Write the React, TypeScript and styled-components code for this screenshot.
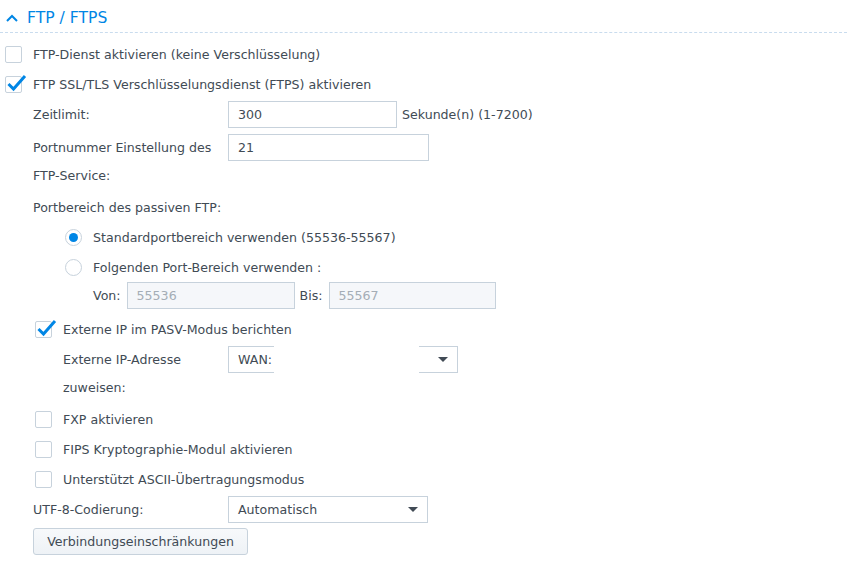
import React from "react";
import styled, { createGlobalStyle } from "styled-components";

const COLORS = {
  text: "#414b55",
  blue: "#0086e5",
  border: "#c7d2dc",
  dashed: "#c9dcee",
  disabledBg: "#f5f7fa",
  disabledText: "#a4adb6",
};

const GlobalStyle = createGlobalStyle`
  body {
    margin: 0;
    background: #fff;
    font-family: "DejaVu Sans", Verdana, sans-serif;
    font-size: 12.6px;
    color: ${COLORS.text};
  }
`;

const Panel = styled.div`
  width: 847px;
  display: flex;
  flex-direction: column;
`;

const Header = styled.div`
  display: flex;
  align-items: center;
  gap: 9px;
  box-sizing: border-box;
  height: 33px;
  padding: 3px 0 0 6px;
  border-bottom: 1px dashed ${COLORS.dashed};
  color: ${COLORS.blue};
  font-size: 15.6px;
  margin-bottom: 6px;
`;

const Body = styled.div`
  display: flex;
  flex-direction: column;
`;

const Row = styled.div<{ $indent?: number }>`
  display: flex;
  align-items: center;
  height: 30px;
  padding-left: ${(p) => p.$indent ?? 0}px;
  white-space: nowrap;
`;

const Box = styled.span`
  position: relative;
  width: 17px;
  height: 17px;
  box-sizing: border-box;
  border: 1px solid ${COLORS.border};
  border-radius: 2px;
  margin-right: 11px;
  flex-shrink: 0;

  svg {
    position: absolute;
    left: 1px;
    top: -4px;
    overflow: visible;
  }
`;

const Radio = styled.span<{ $on?: boolean }>`
  width: 17px;
  height: 17px;
  box-sizing: border-box;
  border: 1px solid ${COLORS.border};
  border-radius: 50%;
  margin-right: 11px;
  display: flex;
  align-items: center;
  justify-content: center;
  flex-shrink: 0;

  &::after {
    content: "";
    display: ${(p) => (p.$on ? "block" : "none")};
    width: 9px;
    height: 9px;
    border-radius: 50%;
    background: ${COLORS.blue};
  }
`;

const FieldRow = styled.div<{ $indent?: number; $top?: number; $bottom?: number }>`
  display: flex;
  align-items: flex-start;
  padding: ${(p) => p.$top ?? 2}px 0 ${(p) => p.$bottom ?? 2}px ${(p) => p.$indent ?? 33}px;
`;

const Label = styled.div<{ $width: number }>`
  width: ${(p) => p.$width}px;
  line-height: 28px;
  flex-shrink: 0;
`;

const Input = styled.div<{ $width: number; $disabled?: boolean }>`
  width: ${(p) => p.$width}px;
  height: 27px;
  box-sizing: border-box;
  border: 1px solid ${COLORS.border};
  background: ${(p) => (p.$disabled ? COLORS.disabledBg : "#fff")};
  color: ${(p) => (p.$disabled ? COLORS.disabledText : COLORS.text)};
  padding-left: 9px;
  display: flex;
  align-items: center;
  flex-shrink: 0;
`;

const Select = styled(Input)`
  justify-content: space-between;
  padding-right: 9px;
  position: relative;
`;

const Arrow = styled.span`
  width: 0;
  height: 0;
  border-left: 5px solid transparent;
  border-right: 5px solid transparent;
  border-top: 5px solid ${COLORS.text};
`;

const Masked = styled.span`
  position: absolute;
  left: 45px;
  top: -2px;
  width: 145px;
  height: calc(100% + 4px);
  background: #fff;
`;

const Suffix = styled.span<{ $before?: number; $after?: number }>`
  line-height: 27px;
  margin-left: ${(p) => p.$before ?? 5}px;
  margin-right: ${(p) => p.$after ?? 0}px;
`;

const Button = styled.button`
  align-self: flex-start;
  margin: 2px 0 0 33px;
  height: 27px;
  width: 215px;
  border: 1px solid ${COLORS.border};
  border-radius: 3px;
  background: linear-gradient(#f7f9fb, #eef2f6);
  font-family: inherit;
  font-size: 12.6px;
  color: ${COLORS.text};
`;

function Check({ on }: { on?: boolean }) {
  return (
    <Box>
      {on && (
        <svg width="20" height="20" viewBox="0 0 20 20">
          <path
            d="M1.5 11 L6.5 16 L18 3"
            fill="none"
            stroke={COLORS.blue}
            strokeWidth="3"
            strokeLinejoin="miter"
          />
        </svg>
      )}
    </Box>
  );
}

function Chevron() {
  return (
    <svg width="12" height="8" viewBox="0 0 12 8">
      <path d="M1 7 L6 2 L11 7" fill="none" stroke={COLORS.blue} strokeWidth="2" />
    </svg>
  );
}

export default function App() {
  return (
    <>
      <GlobalStyle />
      <Panel>
        <Header>
          <Chevron />
          FTP / FTPS
        </Header>
        <Body>
          <Row $indent={5}>
            <Check />
            FTP-Dienst aktivieren (keine Verschlüsselung)
          </Row>
          <Row $indent={5}>
            <Check on />
            FTP SSL/TLS Verschlüsselungsdienst (FTPS) aktivieren
          </Row>
          <FieldRow $bottom={3}>
            <Label $width={195}>Zeitlimit:</Label>
            <Input $width={169}>300</Input>
            <Suffix>Sekunde(n) (1-7200)</Suffix>
          </FieldRow>
          <FieldRow>
            <Label $width={195}>
              Portnummer Einstellung des
              <br />
              FTP-Service:
            </Label>
            <Input $width={201}>21</Input>
          </FieldRow>
          <Row $indent={33}>Portbereich des passiven FTP:</Row>
          <Row $indent={65}>
            <Radio $on />
            Standardportbereich verwenden (55536-55567)
          </Row>
          <Row $indent={65}>
            <Radio />
            Folgenden Port-Bereich verwenden :
          </Row>
          <FieldRow $indent={93} $top={0} $bottom={5}>
            <Suffix $before={0} $after={6}>
              Von:
            </Suffix>
            <Input $width={168} $disabled>
              55536
            </Input>
            <Suffix $after={6}>Bis:</Suffix>
            <Input $width={167} $disabled>
              55567
            </Input>
          </FieldRow>
          <Row $indent={35}>
            <Check on />
            Externe IP im PASV-Modus berichten
          </Row>
          <FieldRow $indent={63}>
            <Label $width={165}>
              Externe IP-Adresse
              <br />
              zuweisen:
            </Label>
            <Select $width={230}>
              WAN:
              <Masked />
              <Arrow />
            </Select>
          </FieldRow>
          <Row $indent={35}>
            <Check />
            FXP aktivieren
          </Row>
          <Row $indent={35}>
            <Check />
            FIPS Kryptographie-Modul aktivieren
          </Row>
          <Row $indent={35}>
            <Check />
            Unterstützt ASCII-Übertragungsmodus
          </Row>
          <FieldRow>
            <Label $width={195}>UTF-8-Codierung:</Label>
            <Select $width={200}>
              Automatisch
              <Arrow />
            </Select>
          </FieldRow>
          <Button>Verbindungseinschränkungen</Button>
        </Body>
      </Panel>
    </>
  );
}
